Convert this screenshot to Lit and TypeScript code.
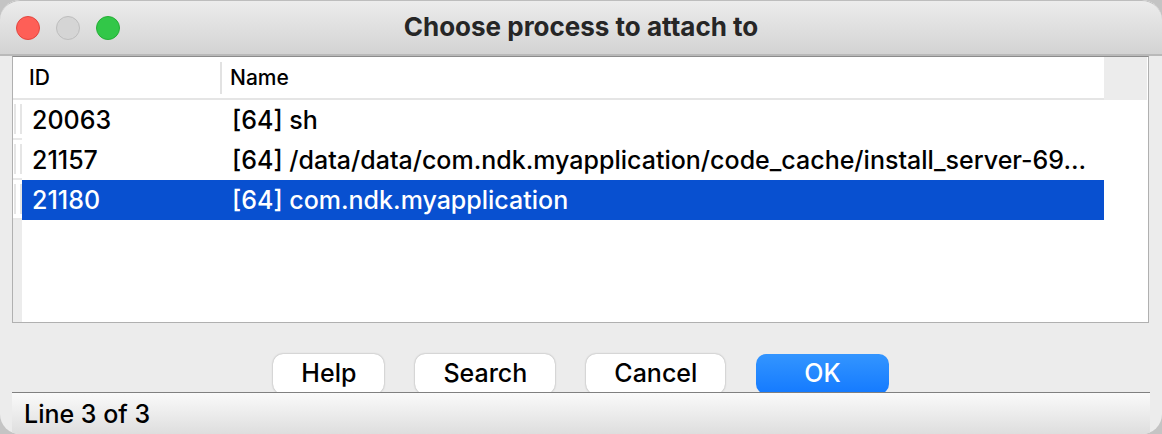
import { LitElement, html, css } from "lit";
import { customElement, state } from "lit/decorators.js";
import { classMap } from "lit/directives/class-map.js";

interface Process {
  id: number;
  name: string;
}

@customElement("app-root")
export class AppRoot extends LitElement {
  static styles = css`
    :host {
      display: block;
      height: 100vh;
      background: #c4c4c4;
      color: #000;
      font-family: Inter, "Liberation Sans", sans-serif;
      font-size: 25px;
      font-weight: 500;
    }
    * {
      box-sizing: border-box;
    }
    .window {
      display: flex;
      flex-direction: column;
      height: 100%;
      background: #ececec;
      border-radius: 20px;
      overflow: hidden;
    }
    .titlebar {
      display: grid;
      grid-template-columns: 1fr auto 1fr;
      align-items: center;
      height: 56px;
      flex: none;
      padding: 0 16px;
      background: linear-gradient(#ececec, #d3d3d3);
      border-top: 1px solid #bdbdbd;
      border-bottom: 2px solid #b9b9b9;
      border-radius: 20px 20px 0 0;
    }
    .lights {
      display: flex;
      gap: 16px;
    }
    .light {
      width: 24px;
      height: 24px;
      padding: 0;
      border: 1px solid #bdbdbd;
      border-radius: 50%;
      background: #d5d5d5;
    }
    .close {
      background: #fe5f57;
      border-color: #e2463f;
    }
    .zoom {
      background: #32c748;
      border-color: #24ae35;
    }
    .title {
      margin: 0;
      padding-bottom: 2px;
      font-size: 26px;
      line-height: 32px;
      font-weight: 700;
      color: #262626;
    }
    .list {
      display: grid;
      grid-template-columns: 1fr 44px;
      flex: 1;
      min-height: 0;
      margin: 0 13px 0 12px;
      border: 1px solid #b0b0b0;
      border-top-color: #8c8c8c;
      background: #fff;
    }
    .main {
      display: flex;
      flex-direction: column;
      min-width: 0;
    }
    .corner {
      height: 43px;
      margin-right: 1px;
      background: #ececec;
    }
    .rest {
      flex: 1;
      border-left: 9px solid #ececec;
    }
    table {
      width: 100%;
      table-layout: fixed;
      border-collapse: separate;
      border-spacing: 0;
    }
    .col-mark {
      width: 9px;
    }
    .col-id {
      width: 200px;
    }
    th {
      height: 43px;
      padding: 0 0 0 8px;
      border-bottom: 2px solid #e5e5e5;
      font-size: 21px;
      line-height: 28px;
      font-weight: 500;
      text-align: left;
    }
    .th-id {
      padding-left: 16px;
      background: linear-gradient(#e2e2e2, #e2e2e2) right top 5px / 2px 32px no-repeat;
    }
    td {
      height: 40px;
      padding: 0 0 0 10px;
      line-height: 32px;
      white-space: nowrap;
      overflow: hidden;
    }
    .mark {
      padding: 0;
      border-bottom: 2px solid #e8e8e8;
      background:
        linear-gradient(#e5e5e5, #e5e5e5) left 1px top 4px / 2px 30px no-repeat,
        linear-gradient(#e5e5e5, #e5e5e5) right top 4px / 2px 30px no-repeat;
    }
    .selected td:not(.mark) {
      background: #0850d0;
      color: #fff;
    }
    .buttons {
      display: flex;
      justify-content: center;
      gap: 31px;
      height: 69px;
      flex: none;
      padding-top: 31px;
      overflow: hidden;
    }
    .button {
      height: 40px;
      padding: 0 28px 2px;
      border: 0;
      border-radius: 10px;
      background: #fff;
      box-shadow: 0 0 2px #00000059;
      color: #000;
      font: inherit;
    }
    .primary {
      padding: 0 48px 2px;
      background: linear-gradient(#3395ff, #147aff);
      box-shadow: none;
      color: #fff;
    }
    .status {
      height: 42px;
      flex: none;
      margin: 0 12px;
      padding: 0 12px;
      border-top: 1px solid #808080;
      background: linear-gradient(#fafafa, #dedede);
      line-height: 42px;
    }
  `;

  @state() private selected = 2;

  private processes: Process[] = [
    { id: 20063, name: "[64] sh" },
    { id: 21157, name: "[64] /data/data/com.ndk.myapplication/code_cache/install_server-69..." },
    { id: 21180, name: "[64] com.ndk.myapplication" },
  ];

  render() {
    return html`
      <main class="window">
        <header class="titlebar">
          <div class="lights">
            <button class="light close" aria-label="Close"></button>
            <button class="light" aria-label="Minimize" disabled></button>
            <button class="light zoom" aria-label="Zoom"></button>
          </div>
          <h1 class="title">Choose process to attach to</h1>
        </header>
        <section class="list">
          <div class="main">
            <table>
              <colgroup>
                <col class="col-mark" />
                <col class="col-id" />
                <col />
              </colgroup>
              <thead>
                <tr>
                  <th class="th-id" colspan="2">ID</th>
                  <th>Name</th>
                </tr>
              </thead>
              <tbody>
                ${this.processes.map(
                  (p, i) => html`
                    <tr
                      class=${classMap({ selected: i === this.selected })}
                      @click=${() => (this.selected = i)}
                    >
                      <td class="mark"></td>
                      <td>${p.id}</td>
                      <td>${p.name}</td>
                    </tr>
                  `,
                )}
              </tbody>
            </table>
            <div class="rest"></div>
          </div>
          <div class="corner"></div>
        </section>
        <div class="buttons">
          <button class="button">Help</button>
          <button class="button">Search</button>
          <button class="button">Cancel</button>
          <button class="button primary">OK</button>
        </div>
        <footer class="status">Line ${this.selected + 1} of ${this.processes.length}</footer>
      </main>
    `;
  }
}
